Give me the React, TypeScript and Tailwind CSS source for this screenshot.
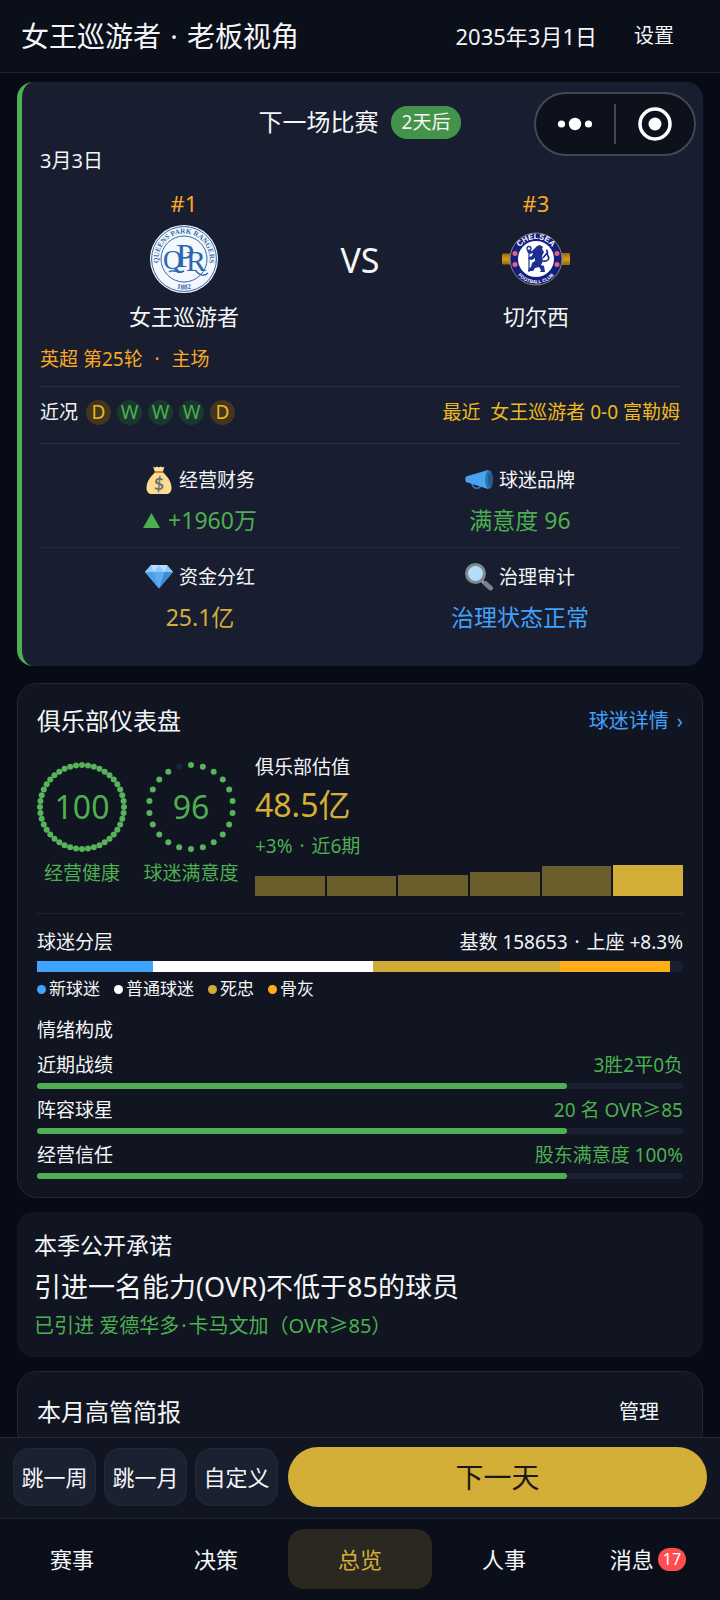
import React from "react";

type Team = {
	rank: string;
	name: string;
	crest: React.ReactNode;
};

type Stat = {
	label: string;
	value: string;
	color: string;
	icon: React.ReactNode;
	rising?: boolean;
};

const QprCrest = () => (
	<svg viewBox="0 0 68 68" className="size-[68px]" aria-hidden="true">
		<defs>
			<path id="qpr-top" d="M9.500 41 A25.500 25.500 0 1 1 58.500 41" />
			<path id="qpr-bottom" d="M16 58.500 A30.500 30.500 0 0 0 52 58.500" />
		</defs>
		<circle cx="34" cy="34" r="34" fill="#f4f8fc" />
		<circle cx="34" cy="34" r="32.400" fill="none" stroke="#2f67ad" strokeWidth="1" />
		<circle cx="34" cy="34" r="23" fill="none" stroke="#2f67ad" strokeWidth="1" />
		<g fill="#3a6ba8" fontFamily="Liberation Serif, serif" fontWeight="bold">
			<text fontSize="7.200">
				<textPath href="#qpr-top" startOffset="50%" textAnchor="middle">
					QUEENS PARK RANGERS
				</textPath>
			</text>
			<text fontSize="7.500">
				<textPath href="#qpr-bottom" startOffset="50%" textAnchor="middle">
					1882
				</textPath>
			</text>
		</g>
		{/* Interlaced monogram */}
		<text fill="#2b66b1" fontFamily="Liberation Serif, serif">
			<tspan x="13" y="44" fontSize="27">Q</tspan>
			<tspan x="26" y="42" fontSize="33">P</tspan>
			<tspan x="36" y="46" fontSize="30">R</tspan>
		</text>
		<path d="M19 47c4-4 9 2 15-1M45 45c4 5 9 7 13 3" fill="none" stroke="#2b66b1" strokeWidth="1.500" />
	</svg>
);

const ChelseaCrest = () => (
	<svg viewBox="0 0 68 68" className="size-[68px]" aria-hidden="true">
		<defs>
			<path id="cfc-top" d="M14 34 A20 20 0 0 1 54 34" />
			<path id="cfc-bottom" d="M10.500 35 A23.500 23.500 0 0 0 57.500 35" />
			<linearGradient id="cfc-gold" x1="0" x2="0" y1="0" y2="1">
				<stop offset="0" stopColor="#8f6a16" />
				<stop offset="0.500" stopColor="#d79a1b" />
				<stop offset="1" stopColor="#8f6a16" />
			</linearGradient>
		</defs>
		<rect x="0" y="28.500" width="12" height="11" rx="1" fill="url(#cfc-gold)" />
		<rect x="56" y="28" width="12" height="12" rx="1" fill="url(#cfc-gold)" />
		<circle cx="34" cy="34" r="26" fill="#141d80" stroke="#8a8577" strokeWidth="1" />
		<circle cx="34" cy="34" r="18" fill="#fff" />
		<g fill="#fff" fontFamily="Liberation Sans, sans-serif" fontWeight="bold">
			<text fontSize="7.800">
				<textPath href="#cfc-top" startOffset="50%" textAnchor="middle">CHELSEA</textPath>
			</text>
			<text fontSize="4.800">
				<textPath href="#cfc-bottom" startOffset="50%" textAnchor="middle">FOOTBALL CLUB</textPath>
			</text>
		</g>
		<g fill="#e0667a">
			<circle cx="13" cy="28.500" r="2.500" />
			<circle cx="13" cy="39.500" r="2.500" />
			<circle cx="55" cy="28.500" r="2.500" />
			<circle cx="55" cy="39.500" r="2.500" />
		</g>
		{/* Rampant lion with staff */}
		<path
			d="M35 21l3-1 3 2-1 2 2 3-2 4 1 5-2 4 3 1 1 6h-5l1-2-2-3-4 1-2 3h-5l1-3 2-1 1-4 3-2v-3l-3 2-4-1 1-2 3-1 1-3-3 1-3-2 1-2 4 1 2-2z"
			fill="#1d2f93"
		/>
		<path d="M41 36c4 1 7-2 5-5s1-5-2-6M41 33l4-5" fill="none" stroke="#1d2f93" strokeWidth="1.700" />
		<path d="M27 25v22" stroke="#1d2f93" strokeWidth="1.200" />
		<circle cx="27" cy="23.500" r="2" fill="none" stroke="#1d2f93" strokeWidth="1.300" />
	</svg>
);

const MoneyBagIcon = () => (
	<svg viewBox="0 0 28 28" className="size-7" aria-hidden="true">
		<path d="M8 0.500l2 1 2-1 2 1 2-1 2 1 1.500-1-1.700 5.500H10z" fill="#ffe0a0" />
		<path d="M10 5h8l1 2.500H9z" fill="#c98528" />
		<path d="M9.500 7h9c3 2.500 8 8 8 15 0 4-2.500 6-5 6h-15c-2.500 0-5-2-5-6 0-7 5-12.500 8-15z" fill="#fddb92" />
		<text x="14" y="23.500" textAnchor="middle" fontSize="17" fontFamily="Lato, sans-serif" fontWeight="bold" fill="#66706c">
			$
		</text>
	</svg>
);

const MegaphoneIcon = () => (
	<svg viewBox="0 0 28 28" className="size-7" aria-hidden="true">
		<path d="M7 16c0 8 9 8 9 2" fill="none" stroke="#2f7fc0" strokeWidth="1.600" />
		<path d="M1 10.500L23 4v19L1 16c-1-1.500-1-4 0-5.500z" fill="#4aa3ef" />
		<ellipse cx="24" cy="13.500" rx="3.800" ry="9.500" fill="#2a73ad" />
		<ellipse cx="25" cy="13.500" rx="2" ry="7" fill="#1f5d91" />
	</svg>
);

const GemIcon = () => (
	<svg viewBox="0 0 28 28" className="size-7" aria-hidden="true">
		<path d="M6 2h16l6 7-14 16.500L0 9z" fill="#5cadf0" />
		<path d="M6 2h16l6 7H0z" fill="#8ecbf9" />
		<path d="M6 2l2.500 7L14 2l5.500 7L22 2z" fill="#b8e0fd" />
		<path d="M0 9h8.500L14 25.500z" fill="#4c9fe8" />
		<path d="M28 9h-8.500L14 25.500z" fill="#3d8cd6" />
	</svg>
);

const MagnifierIcon = () => (
	<svg viewBox="0 0 28 28" className="size-7" aria-hidden="true">
		<path d="M16 17l3 3" stroke="#9db0ba" strokeWidth="3" />
		<path d="M20.500 20.500l5 4.500" stroke="#78828a" strokeWidth="5" strokeLinecap="round" />
		<circle cx="10.500" cy="10.500" r="9" fill="#b5dcf8" stroke="#7c8a94" strokeWidth="3" />
	</svg>
);

const teams: Team[] = [
	{ rank: "#1", name: "女王巡游者", crest: <QprCrest /> },
	{ rank: "#3", name: "切尔西", crest: <ChelseaCrest /> },
];

const form = ["D", "W", "W", "W", "D"];

const stats: Stat[] = [
	{ label: "经营财务", value: "+1960万", color: "text-[#4caf50]", icon: <MoneyBagIcon />, rising: true },
	{ label: "球迷品牌", value: "满意度 96", color: "text-[#4caf50]", icon: <MegaphoneIcon /> },
	{ label: "资金分红", value: "25.1亿", color: "text-[#d4af37]", icon: <GemIcon /> },
	{ label: "治理审计", value: "治理状态正常", color: "text-[#42a0fa]", icon: <MagnifierIcon /> },
];

const valuation = [20, 20, 21, 24, 30, 31];

const fanTiers = [
	{ label: "新球迷", share: 18, color: "bg-[#40a4ff]" },
	{ label: "普通球迷", share: 34, color: "bg-white" },
	{ label: "死忠", share: 29, color: "bg-[#d0ab36]" },
	{ label: "骨灰", share: 17, color: "bg-[#ffae1a]" },
];

const moods = [
	{ label: "近期战绩", value: "3胜2平0负", percent: 82 },
	{ label: "阵容球星", value: "20 名 OVR≥85", percent: 82 },
	{ label: "经营信任", value: "股东满意度 100%", percent: 82 },
];

const tabs = [
	{ label: "赛事" },
	{ label: "决策" },
	{ label: "总览", active: true },
	{ label: "人事" },
	{ label: "消息", badge: 17 },
];

const Dot = () => <span className="mx-0.5">·</span>;

const TeamColumn: React.FC<{ team: Team }> = ({ team }) => (
	<div className="flex w-[288px] flex-col items-center gap-2">
		<span className="text-[22px] leading-7 text-[#f9a825]">{team.rank}</span>
		{team.crest}
		<span className="text-[22px] leading-[30px]">{team.name}</span>
	</div>
);

const Gauge: React.FC<{ value: number; label: string; dots: number }> = ({ value, label, dots }) => {
	const lit = Math.round((value / 100) * dots);
	return (
		<div className="flex w-[90px] flex-col items-center gap-[7px] pt-[9px] text-[#4caf50]">
			<div className="relative size-[90px]">
				<svg viewBox="0 0 90 90" className="size-full" aria-hidden="true">
					{Array.from({ length: dots }, (_, i) => {
						const angle = (i / dots) * Math.PI * 2;
						return (
							<circle
								key={i}
								cx={45 + 42 * Math.sin(angle)}
								cy={45 - 42 * Math.cos(angle)}
								r="3"
								fill={i < lit ? "#57b45b" : "#1b2630"}
							/>
						);
					})}
				</svg>
				<span className="absolute inset-0 flex items-center justify-center text-[32px]">{value}</span>
			</div>
			<span className="text-[19px] leading-7 whitespace-nowrap">{label}</span>
		</div>
	);
};

const MatchCard = () => (
	<section className="mb-[3px] rounded-2xl border-l-[5px] border-[#4caf50] bg-[#181e2f] pt-4 pr-[23px] pb-[33px] pl-[18px]">
		<div className="flex h-12 items-center justify-center gap-3">
			<h2 className="text-[24px]">下一场比赛</h2>
			<span className="flex h-[33px] items-center rounded-2xl bg-[#43944a] px-[11px] text-[19px]">2天后</span>
		</div>
		<p className="text-[20px] leading-[30px]">3月3日</p>

		<div className="mt-[13px] flex items-center justify-between">
			<TeamColumn team={teams[0]} />
			<span className="text-[34px]">VS</span>
			<TeamColumn team={teams[1]} />
		</div>

		<p className="mt-[14px] mb-[13px] text-[19px] leading-7 whitespace-pre text-[#f9a825]">
			英超 第25轮  <Dot />  主场
		</p>

		<div className="flex items-center justify-between border-y border-[#2a3041] pb-[6px] text-[19px]">
			<div className="flex h-[50px] items-center gap-[6px]">
				<span className="mr-0.5">近况</span>
				{form.map((result, idx) => (
					<span
						key={idx}
						className={`flex size-[25px] items-center justify-center rounded-full ${
							result === "W" ? "bg-[#1b382f] text-[#4caf50]" : "bg-[#43361f] text-[#eab51d]"
						}`}
					>
						{result}
					</span>
				))}
			</div>
			<span className="whitespace-pre text-[#edb91c]">最近  女王巡游者 0-0 富勒姆</span>
		</div>

		{/* Club stats */}
		<div className="grid grid-cols-2">
			{stats.map((stat, idx) => (
				<div
					key={stat.label}
					className={`flex flex-col items-center gap-2 ${
						idx < 2 ? "border-b border-[#222838] pt-5 pb-[11px]" : "pt-[13px]"
					}`}
				>
					<div className="flex h-8 items-center gap-[6px] text-[19px]">
						{stat.icon}
						{stat.label}
					</div>
					<div className={`flex h-8 items-center gap-2 text-[23px] ${stat.color}`}>
						{stat.rising && (
							<svg viewBox="0 0 17 15" className="h-[15px] w-[17px]" aria-hidden="true">
								<path d="M8.500 0L17 15H0z" fill="currentColor" />
							</svg>
						)}
						{stat.value}
					</div>
				</div>
			))}
		</div>
	</section>
);

const DashboardCard = () => (
	<section className="rounded-[20px] border border-[#222838] bg-[#101521] px-[19px] pt-5 pb-[18px] text-[19px]">
		<div className="flex items-center justify-between">
			<h2 className="text-[24px] leading-[34px]">俱乐部仪表盘</h2>
			<a href="#fans" className="flex gap-2 text-[20px] text-[#42a0fa]">
				<span>球迷详情</span>
				<span>›</span>
			</a>
		</div>

		<div className="mt-[15px] flex gap-[19px]">
			<Gauge value={100} label="经营健康" dots={44} />
			<Gauge value={96} label="球迷满意度" dots={22} />
			<div className="flex-1">
				<p className="leading-7">俱乐部估值</p>
				<p className="text-[32px] leading-[48px] text-[#d4af37]">48.5亿</p>
				<p className="mt-[3px] leading-7 text-[#4caf50]">+3% <Dot /> 近6期</p>
				<div className="mt-[5px] flex h-[31px] items-end gap-0.5">
					{valuation.map((height, idx) => (
						<div
							key={idx}
							className={`flex-1 ${idx === valuation.length - 1 ? "bg-[#d2ae37]" : "bg-[#6c5d2d]"}`}
							style={{ height }}
						/>
					))}
				</div>
			</div>
		</div>

		{/* Fan tiers */}
		<div className="mt-[17px] flex justify-between border-t border-[#1e2433] pt-[14px] leading-7">
			<span>球迷分层</span>
			<span>基数 158653 <Dot /> 上座 +8.3%</span>
		</div>
		<div className="mt-[5px] flex h-[11px] overflow-hidden rounded-r-full bg-[#1a2030]">
			{fanTiers.map((tier) => (
				<div key={tier.label} className={tier.color} style={{ width: `${tier.share}%` }} />
			))}
		</div>
		<div className="mt-1 flex gap-[14px] text-[17px] leading-[26px]">
			{fanTiers.map((tier) => (
				<span key={tier.label} className="flex items-center gap-[3px]">
					<span className={`size-[9px] rounded-full ${tier.color}`} />
					{tier.label}
				</span>
			))}
		</div>

		{/* Mood breakdown */}
		<h3 className="mt-[14px] leading-7">情绪构成</h3>
		{moods.map((mood) => (
			<div key={mood.label} className="mt-[7px]">
				<div className="flex justify-between leading-7">
					<span>{mood.label}</span>
					<span className="text-[#4caf50]">{mood.value}</span>
				</div>
				<div className="mt-1 h-[6px] rounded-full bg-[#1a2030]">
					<div className="h-full rounded-full bg-[#50ae54]" style={{ width: `${mood.percent}%` }} />
				</div>
			</div>
		))}
	</section>
);

const App: React.FC = () => {
	return (
		<div className="relative flex h-screen flex-col overflow-hidden bg-[#070b15] font-['Noto_Sans','Noto_Sans_CJK_SC',sans-serif] text-[#f4f5f7]">
			<header className="flex h-[73px] shrink-0 items-center justify-between border-b border-[#1e2434] bg-[#0b0f1a] pr-[46px] pl-[21px]">
				<h1 className="text-[28px]">女王巡游者 <Dot /> 老板视角</h1>
				<div className="flex items-center gap-[37px]">
					<time className="text-[22px]">2035年3月1日</time>
					<button className="text-[20px]">设置</button>
				</div>
			</header>

			{/* Host app capsule */}
			<div className="absolute top-[92px] right-6 z-10 flex h-16 w-[162px] items-center rounded-full border-2 border-[#434754] bg-[#0d111b]">
				<button aria-label="更多" className="flex h-full flex-1 items-center justify-center">
					<svg viewBox="0 0 36 14" className="h-[14px] w-9" fill="#fff" aria-hidden="true">
						<circle cx="4.500" cy="7" r="3.600" />
						<circle cx="18" cy="7" r="6.200" />
						<circle cx="31.500" cy="7" r="3.600" />
					</svg>
				</button>
				<span className="h-10 w-0.5 bg-[#434754]" />
				<button aria-label="关闭" className="flex h-full flex-1 items-center justify-center">
					<svg viewBox="0 0 36 36" className="size-9" aria-hidden="true">
						<circle cx="18" cy="18" r="15" fill="none" stroke="#fff" strokeWidth="3.500" />
						<circle cx="18" cy="18" r="6.500" fill="#fff" />
					</svg>
				</button>
			</div>

			<main className="flex min-h-0 flex-1 flex-col gap-[14px] overflow-y-auto px-[17px] pt-[9px] [scrollbar-width:none] *:shrink-0">
				<MatchCard />
				<DashboardCard />

				<section className="rounded-2xl bg-[#101521] p-[17px]">
					<h2 className="text-[23px] leading-8">本季公开承诺</h2>
					<p className="mt-[6px] text-[27px] leading-10">引进一名能力(OVR)不低于85的球员</p>
					<p className="mt-[5px] text-[20px] leading-7 text-[#4caf50]">已引进 爱德华多<Dot />卡马文加（OVR≥85）</p>
				</section>

				<section className="rounded-[20px] border border-[#222838] bg-[#101521] px-[19px] pt-[23px] pb-5">
					<div className="flex items-center justify-between">
						<h2 className="text-[24px] leading-[34px]">本月高管简报</h2>
						<button className="px-6 text-[20px]">管理</button>
					</div>
				</section>
			</main>

			<footer className="shrink-0">
				<div className="flex items-center gap-2 border-t border-[#222838] bg-[#101521] px-[13px] pt-[9px] pb-[11px]">
					{["跳一周", "跳一月", "自定义"].map((label) => (
						<button
							key={label}
							className="h-[58px] w-[83px] rounded-2xl border border-[#222a3a] bg-[#1a2131] text-[22px] whitespace-nowrap"
						>
							{label}
						</button>
					))}
					<button className="ml-0.5 h-[60px] flex-1 rounded-full bg-[#d3af37] text-[28px] text-[#1c1a12]">下一天</button>
				</div>
				<nav className="flex border-t border-[#1e2434] bg-[#0b0f1a] pt-[10px] pb-[11px] text-[22px]">
					{tabs.map((tab) => (
						<button
							key={tab.label}
							className={`flex h-[60px] flex-1 items-center justify-center gap-1 rounded-2xl ${
								tab.active ? "bg-[#2b2721] text-[#d4af37]" : ""
							}`}
						>
							{tab.label}
							{tab.badge && (
								<span className="flex h-[23px] items-center rounded-full bg-[#ff4d4f] px-[5px] text-[16px] text-white">
									{tab.badge}
								</span>
							)}
						</button>
					))}
				</nav>
			</footer>
		</div>
	);
};

export default App;
